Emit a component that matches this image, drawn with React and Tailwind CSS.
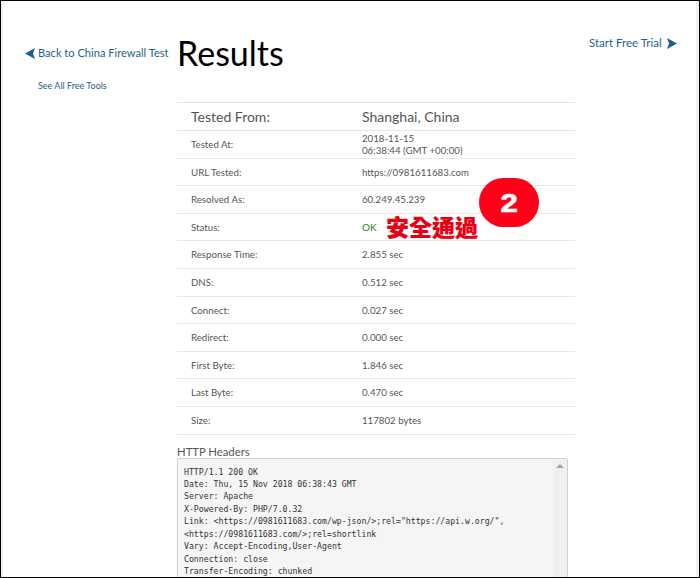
import React from "react";

const rows = [
  ["Tested At:", ["2018-11-15", "06:38:44 (GMT +00:00)"]],
  ["URL Tested:", ["https://0981611683.com"]],
  ["Resolved As:", ["60.249.45.239"]],
  ["Status:", ["OK"]],
  ["Response Time:", ["2.855 sec"]],
  ["DNS:", ["0.512 sec"]],
  ["Connect:", ["0.027 sec"]],
  ["Redirect:", ["0.000 sec"]],
  ["First Byte:", ["1.846 sec"]],
  ["Last Byte:", ["0.470 sec"]],
  ["Size:", ["117802 bytes"]],
];

const headers = [
  "HTTP/1.1 200 OK",
  "Date: Thu, 15 Nov 2018 06:38:43 GMT",
  "Server: Apache",
  "X-Powered-By: PHP/7.0.32",
  'Link: <https://0981611683.com/wp-json/>;rel="https://api.w.org/",',
  "<https://0981611683.com/>;rel=shortlink",
  "Vary: Accept-Encoding,User-Agent",
  "Connection: close",
  "Transfer-Encoding: chunked",
];

function Arrow({ right }) {
  return (
    <svg width="10" height="11" viewBox="0 0 10 11" className="shrink-0">
      <path d={right ? "M0 0 L10 5.5 L0 11 L2 5.5 Z" : "M10 0 L0 5.5 L10 11 L8 5.5 Z"} fill="#1f5f8b" />
    </svg>
  );
}

export default function App() {
  return (
    <div className="relative w-[700px] h-[578px] overflow-hidden bg-white border-[1px] border-black font-['Lato','Open_Sans',sans-serif]">
      <div className="flex h-full border-r-[3px] border-l-[2px] border-[#f0f0f0] rounded-tl-[4px]">
        <div className="w-[174px] shrink-0 pt-[45px] pl-[22px]">
          <div className="flex items-center gap-[3px] text-[11.1px] leading-[14px] text-[#1f5f8b] whitespace-nowrap">
            <Arrow />
            <span>Back to China Firewall Test</span>
          </div>
          <div className="mt-[20px] ml-[13px] text-[9px] leading-[12px] text-[#1f5f8b] whitespace-nowrap">See All Free Tools</div>
        </div>
        <div className="w-[398px] shrink-0">
          <h1 className="pt-[33px] h-[101px] text-[34px] leading-[38px] text-black">Results</h1>
          <div className="border-t border-[#e4e4e4]">
            <div className="flex h-[28px] items-center border-b border-[#e4e4e4] text-[14px] text-[#555]">
              <div className="w-[185px] pl-[14px]">Tested From:</div>
              <div>Shanghai, China</div>
            </div>
            {rows.map(([k, v]) => (
              <div key={k} className="flex h-[27.6px] items-center pt-px border-b border-[#e8e8e8] text-[9.7px] leading-[11.5px] text-[#555]">
                <div className="w-[185px] pl-[14px]">{k}</div>
                <div className={k === "Status:" ? "text-[#2e7d32] text-[10px]" : ""}>
                  {v.map((t) => <div key={t}>{t}</div>)}
                </div>
              </div>
            ))}
          </div>
          <div className="mt-[10px] text-[11.3px] leading-[13px] text-[#555]">HTTP Headers</div>
          <div className="relative w-[391px] h-[200px] border border-[#cfcfcf] rounded-[2px] bg-[#f5f5f5] pt-[7px] pl-[6px] font-['DejaVu_Sans_Mono','Liberation_Mono',monospace] text-[8.2px] leading-[12.45px] text-[#333] whitespace-pre">
            {headers.map((h) => <div key={h}>{h}</div>)}
            <div className="absolute right-0 top-0 bottom-0 w-[14px] bg-[#f0f0f0] flex justify-center pt-[5px]">
              <div className="w-0 h-0 border-l-[4px] border-r-[4px] border-b-[4px] border-l-transparent border-r-transparent border-b-[#a0a0a0]" />
            </div>
          </div>
        </div>
        <div className="flex-1 pt-[35px] pl-[14px]">
          <div className="flex items-center gap-[5px] text-[11.5px] leading-[14px] text-[#1f5f8b] whitespace-nowrap">
            <span>Start Free Trial</span>
            <Arrow right />
          </div>
        </div>
      </div>
      <div className="absolute left-[478px] top-[177px] w-[60px] h-[49px] rounded-full bg-[#ff0018] flex items-center justify-center">
        <span className="text-white text-[26px] leading-none font-bold font-['Liberation_Sans',sans-serif] scale-x-[1.2] [-webkit-text-stroke:0.6px_white]">2</span>
      </div>
      <div className="absolute left-[385px] top-[212px] text-[#e60012] text-[23px] leading-[26px] font-black font-['Noto_Sans_CJK_TC',sans-serif] whitespace-nowrap [-webkit-text-stroke:0.2px_#e60012]">安全通過</div>
    </div>
  );
}
